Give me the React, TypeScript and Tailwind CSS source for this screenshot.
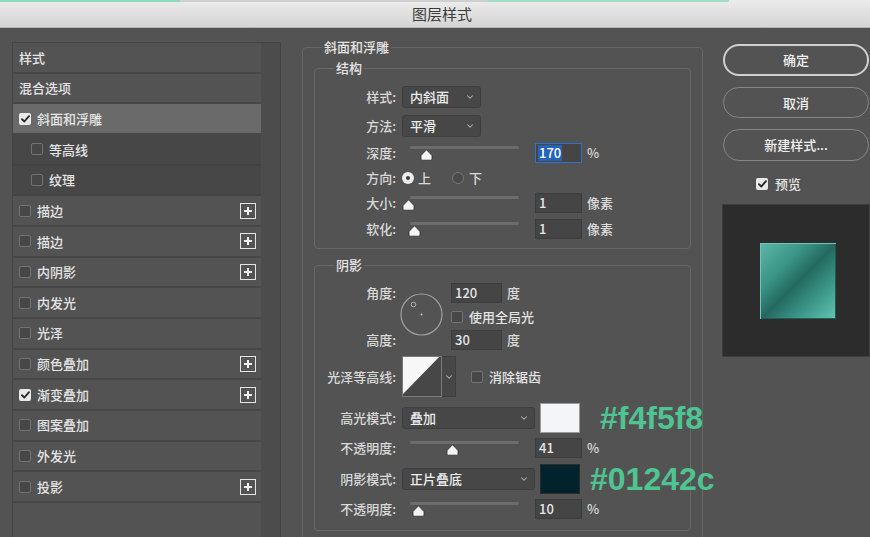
import { ChevronDown } from "lucide-react";

const layerStyles = [
  { label: "样式", kind: "head" },
  { label: "混合选项", kind: "head" },
  { label: "斜面和浮雕", checked: true, selected: true },
  { label: "等高线", sub: true },
  { label: "纹理", sub: true },
  { label: "描边", plus: true },
  { label: "描边", plus: true },
  { label: "内阴影", plus: true },
  { label: "内发光" },
  { label: "光泽" },
  { label: "颜色叠加", plus: true },
  { label: "渐变叠加", checked: true, plus: true },
  { label: "图案叠加" },
  { label: "外发光" },
  { label: "投影", plus: true },
];

function Check({ on }: { on?: boolean }) {
  if (on) {
    return (
      <span className="flex h-[12px] w-[12px] shrink-0 items-center justify-center rounded-[2px] bg-[#e9e9e9]">
        <svg width="9" height="8" viewBox="0 0 9 8">
          <path d="M1 4.2 L3.4 6.5 L8 1.2" fill="none" stroke="#2a2a2a" strokeWidth="1.9" strokeLinecap="round" strokeLinejoin="round" />
        </svg>
      </span>
    );
  }
  return <span className="block h-[12px] w-[12px] shrink-0 rounded-[2px] border border-[#737373] bg-[#474747]" />;
}

function Plus() {
  return (
    <span className="ml-auto mr-[5px] flex h-[16px] w-[16px] items-center justify-center border-[1.5px] border-[#e4e4e4]">
      <svg width="10" height="10" viewBox="0 0 10 10">
        <path d="M5 1 V9 M1 5 H9" stroke="#f0f0f0" strokeWidth="2" />
      </svg>
    </span>
  );
}

function Thumb() {
  return (
    <svg width="13" height="12" viewBox="0 0 13 12">
      <path d="M6.5 0.8 L12 6.5 L12 10 Q12 11.2 10.8 11.2 L2.2 11.2 Q1 11.2 1 10 L1 6.5 Z" fill="#f4f4f4" stroke="#2b2b2b" strokeWidth="0.8" />
    </svg>
  );
}

function Slider({ thumb }: { thumb: number }) {
  return (
    <div className="relative ml-[6px] h-[22px] w-[117px] shrink-0">
      <div className="absolute left-[8px] right-0 top-[4px] h-[3px] rounded-full bg-[#6c6c6c]" />
      <div className="absolute top-[7px]" style={{ left: thumb - 6 }}>
        <Thumb />
      </div>
    </div>
  );
}

function Field({ value, active, w = "w-[47px]" }: { value: string; active?: boolean; w?: string }) {
  return (
    <div
      className={`flex h-[20px] ${w} shrink-0 items-center px-[2px] text-[13px] text-[#e6e6e6] ${
        active ? "border border-[#3173c6] bg-[#454545]" : "border border-[#3d3d3d] bg-[#454545]"
      }`}
    >
      {active ? <span className="bg-[#2463b8] pr-[1px] pl-[1px] leading-[16px] text-white">{value}</span> : <span className="pl-[1px]">{value}</span>}
    </div>
  );
}

function Select({ value, w }: { value: string; w: string }) {
  return (
    <div className={`ml-[6px] flex h-[22px] ${w} shrink-0 items-center justify-between rounded-[3px] border border-[#3e3e3e] bg-[#474747] pl-[7px] pr-[5px] text-[13px] text-[#ececec]`}>
      <span>{value}</span>
      <ChevronDown size={10} strokeWidth={2.5} color="#b5b5b5" />
    </div>
  );
}

function Label({ text }: { text: string }) {
  return <span className="w-[81px] shrink-0 text-right text-[13px] text-[#d9d9d9]">{text}</span>;
}

export default function App() {
  return (
    <div className="h-[537px] w-[870px] overflow-hidden bg-[#535353] font-['Noto_Sans_CJK_SC','Noto_Sans',sans-serif] font-medium text-[#e4e4e4]">
      {/* title bar */}
      <div className="relative h-[28px] border-b border-[#b5b5b5] bg-gradient-to-b from-[#ececec] to-[#d5d5d5]">
        <div className="flex h-[2px]">
          <div className="w-[180px] bg-[#8fd8b9]" />
          <div className="w-[307px] bg-[#cfcfcf]" />
          <div className="w-[242px] bg-[#a3e0c6]" />
        </div>
        <div className="flex h-[25px] items-center justify-center pl-[14px] text-[15px] font-normal text-[#3c3c3c]">图层样式</div>
      </div>

      <div className="flex items-start">
        {/* left style list */}
        <div className="ml-[12px] mt-[14px] flex h-[520px] w-[269px] shrink-0 border border-[#444444]">
          <div className="w-[248px] shrink-0">
            {layerStyles.map((s, i) => (
              <div
                key={i}
                className={`flex h-[30.67px] items-center border-b-2 text-[13px] ${
                  s.selected ? "border-[#484848] bg-[#6a6a6a]" : s.sub ? "border-[#434343] bg-[#474747]" : "border-[#474747] bg-[#535353]"
                } ${s.kind === "head" ? "pl-[6px]" : s.sub ? "pl-[18px]" : "pl-[6px]"}`}
              >
                {s.kind !== "head" && <Check on={s.checked} />}
                <span className={s.kind === "head" ? "" : "ml-[6px]"}>{s.label}</span>
                {s.plus && <Plus />}
              </div>
            ))}
          </div>
          <div className="flex-1 bg-[#4c4c4c]" />
        </div>

        {/* middle bevel panel */}
        <fieldset className="ml-[21px] mt-[11px] w-[401px] min-w-0 shrink-0 rounded-[4px] border border-[#676767] px-[11px] pb-[20px]">
          <legend className="ml-[8px] px-[2px] text-[13px] leading-[16px] text-[#e4e4e4]">斜面和浮雕</legend>

          <fieldset className="mt-[5px] min-w-0 rounded-[4px] border border-[#676767] pb-[8px] pt-[10px]">
            <legend className="ml-[19px] px-[2px] text-[13px] leading-[16px]">结构</legend>

            <div className="flex h-[22px] items-center">
              <Label text="样式:" />
              <Select value="内斜面" w="w-[79px]" />
            </div>
            <div className="mt-[7px] flex h-[22px] items-center">
              <Label text="方法:" />
              <Select value="平滑" w="w-[79px]" />
            </div>
            <div className="mt-[5px] flex h-[22px] items-center">
              <Label text="深度:" />
              <Slider thumb={24} />
              <div className="ml-[16px]">
                <Field value="170" active />
              </div>
              <span className="ml-[5px] text-[13px] text-[#d9d9d9]">%</span>
            </div>
            <div className="mt-[3px] flex h-[22px] items-center text-[13px] text-[#d9d9d9]">
              <Label text="方向:" />
              <span className="ml-[6px] flex h-[12px] w-[12px] items-center justify-center rounded-full bg-[#ededed]">
                <span className="h-[4px] w-[4px] rounded-full bg-[#3a3a3a]" />
              </span>
              <span className="ml-[4px]">上</span>
              <span className="ml-[21px] h-[12px] w-[12px] rounded-full border border-[#777777] bg-[#4a4a4a]" />
              <span className="ml-[5px]">下</span>
            </div>
            <div className="mt-[3px] flex h-[22px] items-center">
              <Label text="大小:" />
              <Slider thumb={6} />
              <div className="ml-[16px]">
                <Field value="1" />
              </div>
              <span className="ml-[5px] text-[13px] text-[#d9d9d9]">像素</span>
            </div>
            <div className="mt-[4px] flex h-[22px] items-center">
              <Label text="软化:" />
              <Slider thumb={12} />
              <div className="ml-[16px]">
                <Field value="1" />
              </div>
              <span className="ml-[5px] text-[13px] text-[#d9d9d9]">像素</span>
            </div>
          </fieldset>

          <fieldset className="mt-[8px] min-w-0 rounded-[4px] border border-[#676767] pb-[11px] pt-[10px]">
            <legend className="ml-[19px] px-[2px] text-[13px] leading-[16px]">阴影</legend>

            <div className="flex h-[67px]">
              <div className="flex flex-col justify-between">
                <div className="flex h-[20px] items-center">
                  <Label text="角度:" />
                </div>
                <div className="flex h-[20px] items-center">
                  <Label text="高度:" />
                </div>
              </div>
              <svg className="ml-[4px] mt-[10px] shrink-0" width="43" height="43" viewBox="0 0 43 43">
                <circle cx="21.5" cy="21.5" r="20.5" fill="none" stroke="#a0a0a0" strokeWidth="1.2" />
                <circle cx="13.5" cy="11.5" r="2.3" fill="none" stroke="#b0b0b0" strokeWidth="1" />
                <circle cx="21.5" cy="21.5" r="1" fill="#c8c8c8" />
              </svg>
              <div className="ml-[8px] flex flex-col">
                <div className="flex h-[20px] items-center">
                  <Field value="120" w="w-[51px]" />
                  <span className="ml-[5px] text-[13px] text-[#d9d9d9]">度</span>
                </div>
                <div className="mt-[7px] flex h-[13px] items-center">
                  <Check />
                  <span className="ml-[6px] text-[13px] text-[#e4e4e4]">使用全局光</span>
                </div>
                <div className="mt-[7px] flex h-[20px] items-center">
                  <Field value="30" w="w-[51px]" />
                  <span className="ml-[5px] text-[13px] text-[#d9d9d9]">度</span>
                </div>
              </div>
            </div>

            <div className="mt-[6px] flex h-[41px] items-center">
              <Label text="光泽等高线:" />
              <div className="ml-[6px] flex h-[41px]">
                <svg width="40" height="41" viewBox="0 0 40 41" className="border border-[#7a7a7a]">
                  <rect width="40" height="41" fill="#474747" />
                  <polygon points="0,0 38,0 0,39" fill="#f7f7f7" />
                </svg>
                <div className="flex w-[14px] items-center justify-center border border-l-0 border-[#3e3e3e] bg-[#474747]">
                  <ChevronDown size={10} strokeWidth={2.5} color="#b5b5b5" />
                </div>
              </div>
              <div className="ml-[15px] flex">
                <Check />
              </div>
              <span className="ml-[6px] text-[13px] text-[#e4e4e4]">消除锯齿</span>
            </div>

            <div className="mt-[6px] flex h-[30px] items-center">
              <Label text="高光模式:" />
              <Select value="叠加" w="w-[133px]" />
              <div className="ml-[5px] h-[30px] w-[40px] shrink-0 border border-[#9a9a9a] bg-[#f4f5f8]" />
              <span className="ml-[20px] whitespace-nowrap font-['Liberation_Sans',sans-serif] text-[32px] font-bold leading-none text-[#4fc493]">#f4f5f8</span>
            </div>
            <div className="mt-[5px] flex h-[20px] items-center">
              <Label text="不透明度:" />
              <Slider thumb={50} />
              <div className="ml-[16px]">
                <Field value="41" />
              </div>
              <span className="ml-[5px] text-[13px] text-[#d9d9d9]">%</span>
            </div>
            <div className="mt-[6px] flex h-[30px] items-center">
              <Label text="阴影模式:" />
              <Select value="正片叠底" w="w-[133px]" />
              <div className="ml-[5px] h-[30px] w-[40px] shrink-0 border border-[#2a2a2a] bg-[#01242c]" />
              <span className="ml-[10px] whitespace-nowrap font-['Liberation_Sans',sans-serif] text-[32px] font-bold leading-none text-[#4fc493]">#01242c</span>
            </div>
            <div className="mt-[5px] flex h-[20px] items-center">
              <Label text="不透明度:" />
              <Slider thumb={16} />
              <div className="ml-[16px]">
                <Field value="10" />
              </div>
              <span className="ml-[5px] text-[13px] text-[#d9d9d9]">%</span>
            </div>
          </fieldset>
        </fieldset>

        {/* right column */}
        <div className="ml-[19px] mt-[16px] flex w-[148px] shrink-0 flex-col">
          <button className="ml-[1px] flex h-[32px] w-[146px] items-center justify-center rounded-full border-2 border-[#cfcfcf] text-[13px] text-[#f0f0f0]">确定</button>
          <button className="ml-[1px] mt-[11px] flex h-[31px] w-[146px] items-center justify-center rounded-full border-[1.5px] border-[#858585] text-[13px] text-[#f0f0f0]">取消</button>
          <button className="ml-[1px] mt-[11px] flex h-[32px] w-[146px] items-center justify-center rounded-full border-[1.5px] border-[#858585] text-[13px] text-[#f0f0f0]">新建样式...</button>
          <div className="ml-[34px] mt-[15px] flex h-[16px] items-center">
            <Check on />
            <span className="ml-[7px] text-[13px]">预览</span>
          </div>
          <div className="mt-[12px] flex h-[153px] items-center border border-[#3d3d3d] bg-[#2c2c2c] pl-[37px]">
            <div className="h-[76px] w-[76px] border-t border-l border-[#6fc8b6] bg-[linear-gradient(135deg,#5bb7a6_0%,#3a9487_30%,#24695f_50%,#3a9487_72%,#63c6b2_100%)] shadow-[inset_-1px_-1px_0_#1f5a52]" />
          </div>
        </div>
      </div>
    </div>
  );
}
